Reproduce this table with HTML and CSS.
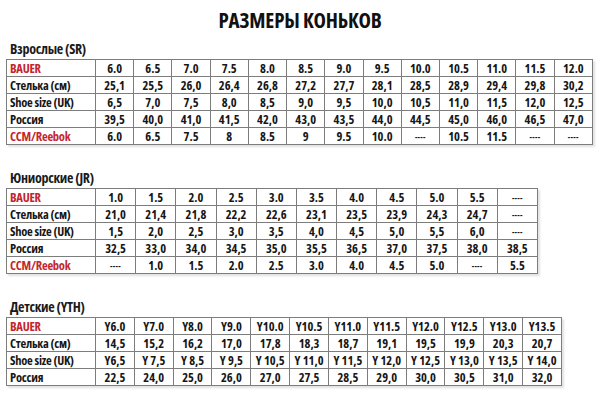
FILE: index.html
```html
<!DOCTYPE html>
<html lang="ru">
<head>
<meta charset="utf-8">
<title>Размеры коньков</title>
<link rel="stylesheet" href="styles.css">
</head>
<body>
<h1 class="title">РАЗМЕРЫ КОНЬКОВ</h1>

<section class="group">
  <h2 class="group-title">Взрослые (SR)</h2>
  <table class="sizes sizes-sr">
    <colgroup><col class="label-col"></colgroup>
    <tr class="brand"><th>BAUER</th><td>6.0</td><td>6.5</td><td>7.0</td><td>7.5</td><td>8.0</td><td>8.5</td><td>9.0</td><td>9.5</td><td>10.0</td><td>10.5</td><td>11.0</td><td>11.5</td><td>12.0</td></tr>
    <tr><th>Стелька (см)</th><td>25,1</td><td>25,5</td><td>26,0</td><td>26,4</td><td>26,8</td><td>27,2</td><td>27,7</td><td>28,1</td><td>28,5</td><td>28,9</td><td>29,4</td><td>29,8</td><td>30,2</td></tr>
    <tr><th>Shoe size (UK)</th><td>6,5</td><td>7,0</td><td>7,5</td><td>8,0</td><td>8,5</td><td>9,0</td><td>9,5</td><td>10,0</td><td>10,5</td><td>11,0</td><td>11,5</td><td>12,0</td><td>12,5</td></tr>
    <tr><th>Россия</th><td>39,5</td><td>40,0</td><td>41,0</td><td>41,5</td><td>42,0</td><td>43,0</td><td>43,5</td><td>44,0</td><td>44,5</td><td>45,0</td><td>46,0</td><td>46,5</td><td>47,0</td></tr>
    <tr class="brand"><th>CCM/Reebok</th><td>6.0</td><td>6.5</td><td>7.5</td><td>8</td><td>8.5</td><td>9</td><td>9.5</td><td>10.0</td><td class="na">----</td><td>10.5</td><td>11.5</td><td class="na">----</td><td class="na">----</td></tr>
  </table>
</section>

<section class="group">
  <h2 class="group-title">Юниорские (JR)</h2>
  <table class="sizes sizes-jr">
    <colgroup><col class="label-col"></colgroup>
    <tr class="brand"><th>BAUER</th><td>1.0</td><td>1.5</td><td>2.0</td><td>2.5</td><td>3.0</td><td>3.5</td><td>4.0</td><td>4.5</td><td>5.0</td><td>5.5</td><td class="na">----</td></tr>
    <tr><th>Стелька (см)</th><td>21,0</td><td>21,4</td><td>21,8</td><td>22,2</td><td>22,6</td><td>23,1</td><td>23,5</td><td>23,9</td><td>24,3</td><td>24,7</td><td class="na">----</td></tr>
    <tr><th>Shoe size (UK)</th><td>1,5</td><td>2,0</td><td>2,5</td><td>3,0</td><td>3,5</td><td>4,0</td><td>4,5</td><td>5,0</td><td>5,5</td><td>6,0</td><td class="na">----</td></tr>
    <tr><th>Россия</th><td>32,5</td><td>33,0</td><td>34,0</td><td>34,5</td><td>35,0</td><td>35,5</td><td>36,5</td><td>37,0</td><td>37,5</td><td>38,0</td><td>38,5</td></tr>
    <tr class="brand"><th>CCM/Reebok</th><td class="na">----</td><td>1.0</td><td>1.5</td><td>2.0</td><td>2.5</td><td>3.0</td><td>4.0</td><td>4.5</td><td>5.0</td><td class="na">----</td><td>5.5</td></tr>
  </table>
</section>

<section class="group">
  <h2 class="group-title">Детские (YTH)</h2>
  <table class="sizes sizes-yth">
    <colgroup><col class="label-col"></colgroup>
    <tr class="brand"><th>BAUER</th><td>Y6.0</td><td>Y7.0</td><td>Y8.0</td><td>Y9.0</td><td>Y10.0</td><td>Y10.5</td><td>Y11.0</td><td>Y11.5</td><td>Y12.0</td><td>Y12.5</td><td>Y13.0</td><td>Y13.5</td></tr>
    <tr><th>Стелька (см)</th><td>14,5</td><td>15,2</td><td>16,2</td><td>17,0</td><td>17,8</td><td>18,3</td><td>18,7</td><td>19,1</td><td>19,5</td><td>19,9</td><td>20,3</td><td>20,7</td></tr>
    <tr><th>Shoe size (UK)</th><td>Y6,5</td><td>Y 7,5</td><td>Y 8,5</td><td>Y 9,5</td><td>Y 10,5</td><td>Y 11,0</td><td>Y 11,5</td><td>Y 12,0</td><td>Y 12,5</td><td>Y 13,0</td><td>Y 13,5</td><td>Y 14,0</td></tr>
    <tr><th>Россия</th><td>22,5</td><td>24,0</td><td>25,0</td><td>26,0</td><td>27,0</td><td>27,5</td><td>28,5</td><td>29,0</td><td>30,0</td><td>30,5</td><td>31,0</td><td>32,0</td></tr>
  </table>
</section>
</body>
</html>
```

FILE: styles.css
```css
html, body {
  margin: 0;
  padding: 0;
  background: #ffffff;
}

body {
  width: 600px;
  height: 400px;
  overflow: hidden;
  padding: 0 6px;
  box-sizing: border-box;
  font-family: "Open Sans", "Liberation Sans", sans-serif;
  font-stretch: 75%;
  font-weight: bold;
  color: #161616;
}

.title {
  margin: 8px 0 0;
  font-size: 21px;
  line-height: 24px;
  text-align: center;
  font-weight: bold;
  letter-spacing: -0.2px;
  color: #111;
}

.group {
  display: flex;
  flex-direction: column;
  align-items: flex-start;
  margin-top: 9px;
}

.group + .group {
  margin-top: 25px;
}

.group-title {
  margin: 0 0 2px 4px;
  font-size: 14px;
  line-height: 16px;
  font-weight: bold;
  letter-spacing: -0.3px;
  color: #1a1a1a;
}

.sizes {
  border-collapse: collapse;
  table-layout: fixed;
  font-size: 12.5px;
  box-shadow: 2px 2px 2px rgba(0, 0, 0, 0.12);
}

.sizes-sr { width: 587px; }
.sizes-jr { width: 532px; }
.sizes-yth { width: 556px; }

.label-col { width: 89px; }

.sizes th,
.sizes td {
  border: 1px solid #7d7d7d;
  height: 16px;
  padding: 1px 0 0;
  line-height: 15px;
  box-sizing: border-box;
  white-space: nowrap;
  overflow: hidden;
}

.sizes th {
  text-align: left;
  padding-left: 3px;
  font-weight: bold;
  letter-spacing: -0.25px;
}

.sizes td {
  text-align: center;
}

.sizes tr { height: 17px; }

.brand th {
  color: #c4262e;
}

.na {
  font-size: 8px;
  letter-spacing: 0.3px;
}
```
